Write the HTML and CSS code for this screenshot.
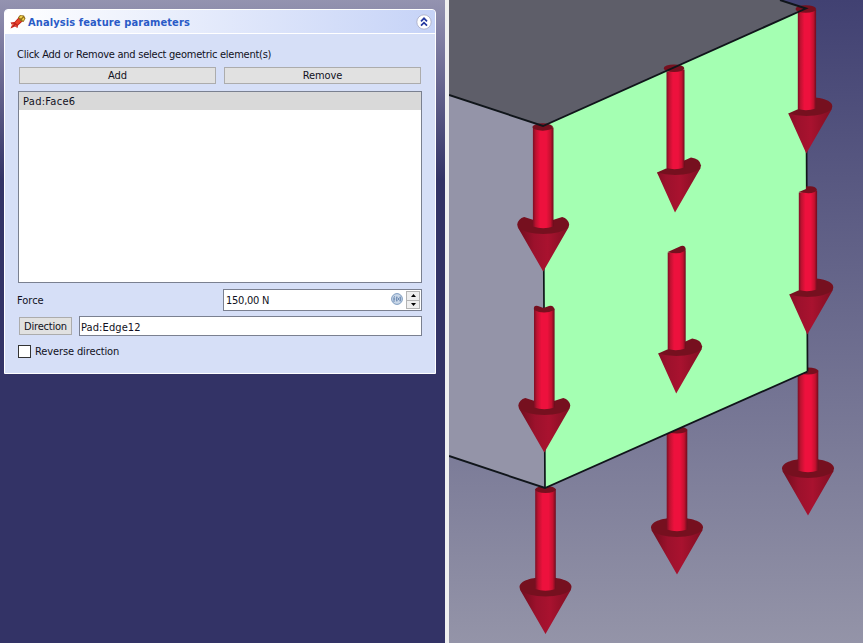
FILE: index.html
```
<!DOCTYPE html>
<html lang="en">
<head>
<meta charset="utf-8">
<title>Analysis feature parameters</title>
<link rel="stylesheet" href="styles.css">
</head>
<body>
<div class="app">
  <aside class="sidebar">
    <section class="panel">
      <header class="panel-head">
        <svg class="force-icon" width="16" height="16" viewBox="0 0 16 16">
          <path d="M.5 14.500L2 11 .5 8.500 4.500 8 9 3 13 7 8 11.500 7.500 14 5 12.500z" fill="#c5221c"/>
          <path d="M5 8.500L9 4.500 11.500 7 7.500 10.500z" fill="#e8452c"/>
          <path d="M2 9.500l2 .5-2 2zM6 11l1 2-2-1z" fill="#f07a58"/>
          <path d="M8 3.500L10 1l4 .5 1.500 3-2 3.500-3-1z" fill="#92701c"/>
          <path d="M9 3.500l2-2 2 1-2 2zM12 5.500l1.500-2 1 1.500-1.500 2z" fill="#f0d04c"/>
        </svg>
        <h1>Analysis feature parameters</h1>
        <button class="collapse" aria-label="Collapse">
          <svg width="16" height="16" viewBox="0 0 16 16">
            <circle cx="8" cy="8" r="7.200" fill="#fff" stroke="#b1b5cf"/>
            <path d="M5 7.300l3-3 3 3M5 11.600l3-3 3 3" fill="none" stroke="#2438a0" stroke-width="1.700"/>
          </svg>
        </button>
      </header>
      <div class="panel-body">
        <p class="hint">Click Add or Remove and select geometric element(s)</p>
        <div class="actions">
          <button class="btn">Add</button>
          <button class="btn">Remove</button>
        </div>
        <ul class="list"><li><span class="ref">Pad:Face6</span></li></ul>
        <div class="force-row">
          <label class="force-label">Force</label>
          <div class="spin">
            <span class="value">150,00 N</span>
            <svg class="fx" width="12" height="12" viewBox="0 0 12 12">
              <circle cx="6" cy="6" r="5.400" fill="#c9d7e8" stroke="#7d9bbf"/>
              <path d="M3 9V4.500q0-1 1-1M2.400 6H4M5.800 3.500q-1 2.500 0 5M6.500 4.500l2 3M8.500 4.500l-2 3M9.200 3.500q1 2.500 0 5" fill="none" stroke="#5879a6" stroke-width=".8"/>
            </svg>
            <span class="steps">
              <i><svg width="5" height="3" viewBox="0 0 5 3"><path d="M0 3L2.500 0 5 3z"/></svg></i>
              <i><svg width="5" height="3" viewBox="0 0 5 3"><path d="M0 0h5L2.500 3z"/></svg></i>
            </span>
          </div>
        </div>
        <div class="direction-row">
          <button class="btn dir">Direction</button>
          <div class="field"><span class="edge">Pad:Edge12</span></div>
        </div>
        <label class="check"><span class="box"></span><span class="reverse">Reverse direction</span></label>
      </div>
    </section>
  </aside>
  <div class="splitter"></div>
  <main class="viewport">
    <svg width="414" height="643" viewBox="449 0 414 643">
      <defs>
        <linearGradient id="shaft" x1="0" x2="1" y1="0" y2="0">
          <stop offset="0" stop-color="#7c0f24"/><stop offset=".14" stop-color="#bd1230"/>
          <stop offset=".36" stop-color="#ed113d"/><stop offset=".65" stop-color="#ed113d"/>
          <stop offset=".85" stop-color="#c5112f"/><stop offset="1" stop-color="#6d0c1d"/>
        </linearGradient>
        <linearGradient id="cone" gradientUnits="userSpaceOnUse" x1="-23" x2="23" y1="-28" y2="-28">
          <stop offset="0" stop-color="#760e20"/><stop offset=".3" stop-color="#9c112c"/>
          <stop offset=".6" stop-color="#a9122f"/><stop offset="1" stop-color="#850f24"/>
        </linearGradient>
        <!-- Each arrow has its tip at the origin -->
        <g id="arrow-full">
          <path d="M-26-47C-26-60 26-60 26-47L25.300-44 18-36H-18L-25.300-44z" fill="#76101f"/>
          <path d="M-25.300-44Q-18-38 0-37.500Q18-38 25.300-44L0 0z" fill="url(#cone)"/>
          <path d="M-10.300-145V-45Q0-41.500 10.300-45V-145z" fill="url(#shaft)"/>
          <ellipse cy="-144.500" rx="10.300" ry="3.500" fill="#76101f"/>
        </g>
        <g id="arrow-corner-head">
          <path d="M-26-47Q-25-53-19-54.500L-8-51H8L19-54.500Q25-53 26-47L25.300-44 18-36H-18L-25.300-44z" fill="#76101f"/>
          <path d="M-25.300-44Q-18-38 0-37.500Q18-38 25.300-44L0 0z" fill="url(#cone)"/>
          <path d="M-10.300-144V-45Q0-41.500 10.300-45V-144z" fill="url(#shaft)"/>
        </g>
        <g id="arrow-face-head">
          <path d="M-18-40L16-55Q25-54 26-47L25.300-44 18-36H-15z" fill="#76101f"/>
          <path d="M-18-40Q-10-38 0-37.500Q18-38 25.300-44L0 0z" fill="url(#cone)"/>
          <path d="M-8.500-141V-44.500Q0-42 9.500-45V-143z" fill="url(#shaft)"/>
        </g>
        <g id="arrow-edge-head">
          <path d="M-18-40L0-48V-56H9Q26-54 26-47L25.300-44 18-36H-15z" fill="#76101f"/>
          <path d="M-18-40Q-10-38 0-37.500Q18-38 25.300-44L0 0z" fill="url(#cone)"/>
          <path d="M-8.500-142V-44.500Q0-42 9.800-45V-144z" fill="url(#shaft)"/>
        </g>
        <linearGradient id="sky" x1="0" x2="0" y1="0" y2="1">
          <stop offset="0" stop-color="#414172"/><stop offset="1" stop-color="#9494a8"/>
        </linearGradient>
      </defs>
      <rect x="449" width="414" height="643" fill="url(#sky)"/>
      <use href="#arrow-full" x="545.500" y="634"/>
      <use href="#arrow-full" x="677" y="574.500"/>
      <use href="#arrow-full" x="808" y="515.500"/>
      <path d="M449 0H780L806 8.500 543 126 449 95z" fill="#5e5e69"/>
      <path d="M449 95L543 126 545 488 449 456z" fill="#9494a8"/>
      <path d="M543 126L806 8.500 807.500 371.500 545 488z" fill="#a4ffb2"/>
      <path d="M543 126L545 488M806 9L807.500 371.500" stroke="#10151a" stroke-width="1.700"/>
      <use href="#arrow-corner-head" x="543.200" y="271.500"/>
      <ellipse cx="542.700" cy="127" rx="10.300" ry="3.700" fill="#76101f"/>
      <use href="#arrow-corner-head" x="544.300" y="452.500"/>
      <path d="M534 310Q533 305 538 306L543.500 308 549 306Q554 305 554.300 310Q544 315 534 310z" fill="#76101f"/>
      <use href="#arrow-face-head" x="675" y="212.500"/>
      <ellipse cx="674" cy="68.300" rx="10.300" ry="3.800" fill="#76101f"/>
      <use href="#arrow-face-head" x="676.200" y="393.500"/>
      <path d="M667.700 252L681 246Q686 245 685.700 250.500Q679 255 667.700 252z" fill="#76101f"/>
      <use href="#arrow-edge-head" x="806.300" y="153.500"/>
      <ellipse cx="805.800" cy="9" rx="10.300" ry="3.800" fill="#76101f"/>
      <use href="#arrow-edge-head" x="807.300" y="334.500"/>
      <path d="M798.800 192L806 189V186.500Q816 185 817 190Q814 195 798.800 192z" fill="#76101f"/>
      <path d="M449 95L543 126 806 8.500 780 0M449 456L545 488 807.500 371.500" fill="none" stroke="#10151a" stroke-width="1.900"/>
    </svg>
  </main>
</div>
</body>
</html>
```
FILE: styles.css
```
* { box-sizing: border-box; }
body { margin: 0; font: 11px/14px "DejaVu Sans Condensed", "DejaVu Sans", sans-serif; font-stretch: condensed; color: #111122; overflow: hidden; }
button { font: inherit; color: inherit; padding: 0; }
p, ul, h1 { margin: 0; padding: 0; }
svg { display: block; flex: none; }
.app { display: flex; width: 863px; height: 643px; }
.sidebar { width: 445px; padding: 9px 9px 0 4px; background: linear-gradient(#9493b0 0, #8583a6 30px, #333366 180px); }
.splitter { width: 4px; background: #f0f0f0; }
.viewport { width: 414px; }
.panel { height: 365px; border: 1px solid #fff; border-radius: 4px 4px 0 0; background: #d6dff7; overflow: hidden; }
.panel-head { display: flex; align-items: center; height: 24px; padding: 0 3px 0 5px; border-bottom: 1px solid #fff; background: linear-gradient(90deg, #fff, #c6d3f7); }
h1 { font-size: 11px; font-weight: bold; color: #2a5bc7; margin: 2px 0 0 2px; letter-spacing: .11px; white-space: nowrap; }
.collapse { margin-left: auto; border: 0; background: none; }
.panel-body { padding: 13px 13px 0 12px; }
.hint { height: 20px; padding-top: 1px; letter-spacing: -.25px; white-space: nowrap; }
.actions { display: flex; gap: 8px; padding: 0 1px 0 2px; }
.btn { flex: 1; height: 17px; padding-top: 1px; border: 1px solid #acacac; background: #e1e1e1; line-height: 14px; letter-spacing: -.1px; }
.list { height: 192px; margin: 7px 0 0 1px; border: 1px solid #7a8090; background: #fff; list-style: none; }
.list li { height: 18px; padding: 3px 0 0 4px; background: #d9d9d9; letter-spacing: .3px; }
.force-row { display: flex; justify-content: space-between; align-items: center; height: 22px; margin-top: 6px; }
.force-label { padding-top: 2px; }
.spin { display: flex; align-items: center; width: 199px; height: 22px; padding: 1px 1px 1px 2px; border: 1px solid #7a8090; background: #fff; }
.value { padding-top: 2px; letter-spacing: -.25px; }
.fx { margin: -3px 3px 0 auto; }
.steps { display: flex; flex-direction: column; width: 14px; height: 18px; border: 1px solid #b4b4b4; background: #efefef; }
.steps i { flex: 1; display: flex; align-items: center; justify-content: center; }
.steps i + i { border-top: 1px solid #b4b4b4; }
.direction-row { display: flex; gap: 7px; margin-top: 5px; padding-left: 2px; align-items: center; }
.dir { flex: none; width: 53px; height: 18px; padding-top: 2px; letter-spacing: -.2px; }
.field { flex: 1; height: 20px; padding: 4px 0 0 1px; border: 1px solid #7a8090; background: #fff; letter-spacing: .1px; }
.check { display: flex; align-items: center; gap: 4px; height: 14px; margin-top: 8px; padding-left: 1px; }
.box { width: 13px; height: 13px; border: 1px solid #333; background: #fff; }
.reverse { padding-top: 2px; letter-spacing: -.12px; }
```
